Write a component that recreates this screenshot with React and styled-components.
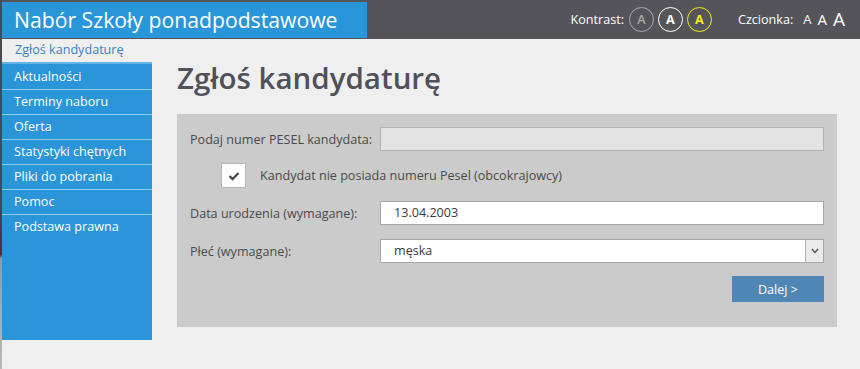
import React from 'react'
import styled, { createGlobalStyle } from 'styled-components'

const GlobalStyle = createGlobalStyle`
  html, body {
    margin: 0;
    padding: 0;
    background: #efefef;
    font-family: "Open Sans", "Noto Sans", Arial, sans-serif;
  }
`

const Page = styled.div`
  width: 860px;
  height: 369px;
  display: flex;
  overflow: hidden;
  background: #efefef;
`

const EdgeStrip = styled.div`
  width: 2px;
  flex: none;
  background: linear-gradient(180deg, #4a4a52 0%, #4a4a52 55%, #5a2a30 68%, #6a2026 69%, #9a9a9a 70%, #b9b9b9 100%);
`

const Frame = styled.div`
  flex: 1;
  display: flex;
  flex-direction: column;
`

const Header = styled.header`
  height: 39px;
  background: #55545b;
  display: flex;
  align-items: stretch;
  padding-top: 2px;
  box-sizing: border-box;
`

const Brand = styled.div`
  width: 365px;
  height: 36px;
  background: #2996da;
  color: #fff;
  font-size: 21.2px;
  line-height: 36px;
  padding-left: 12px;
  box-sizing: border-box;
`

const Tools = styled.div`
  flex: 1;
  display: flex;
  align-items: center;
  justify-content: flex-end;
  padding-right: 15px;
  color: #fff;
  font-size: 12.6px;
  padding-bottom: 2px;
`

const ToolLabel = styled.span`
  margin-right: ${p => p.$gap || 5}px;
`

const Contrast = styled.span`
  width: 23px;
  height: 23px;
  border-radius: 50%;
  border: 1px solid ${p => p.$color};
  color: ${p => p.$color};
  font-weight: ${p => (p.$bold ? 700 : 600)};
  display: inline-flex;
  align-items: center;
  justify-content: center;
  font-size: 12.6px;
  margin-right: 4px;
`

const Spacer = styled.span`
  width: 22px;
`

const SizeA = styled.span`
  font-size: ${p => p.$size}px;
  margin-left: ${p => p.$gap}px;
  line-height: 1;
`

const Body = styled.div`
  flex: 1;
  display: flex;
`

const Aside = styled.aside`
  width: 150px;
  display: flex;
  flex-direction: column;
`

const Crumb = styled.div`
  height: 23px;
  border-bottom: 2px solid #5fb4e8;
  color: #3b7fc4;
  font-size: 12.6px;
  line-height: 22px;
  padding-left: 13px;
`

const Nav = styled.ul`
  list-style: none;
  margin: 0;
  padding: 1px 0 0;
  height: 275px;
  background: #2a96d9;
`

const NavItem = styled.li`
  height: 24px;
  line-height: 24px;
  color: #fff;
  font-size: 12.6px;
  padding-left: 12px;
  border-bottom: 1px solid ${p => (p.$last ? 'transparent' : '#8fcbef')};
`

const Main = styled.main`
  padding-left: 25px;
  width: 660px;
`

const Title = styled.h1`
  margin: 17px 0 0;
  height: 58px;
  font-size: 29.5px;
  font-weight: 600;
  color: #50505a;
  line-height: 44px;
`

const Panel = styled.form`
  background: #cbcbcb;
  height: 213px;
  padding: 13px 13px 0;
  box-sizing: border-box;
`

const Row = styled.div`
  display: flex;
  align-items: center;
  height: 24px;
  margin-bottom: ${p => p.$mb || 14}px;
`

const Label = styled.label`
  width: 190px;
  color: #4a4a4a;
  font-size: 12.6px;
`

const Field = styled.div`
  flex: 1;
  height: 24px;
  box-sizing: border-box;
  border: 1px solid ${p => (p.$disabled ? '#b3b3b3' : '#a6a6a6')};
  background: ${p => (p.$disabled ? '#e3e3e3' : '#fff')};
  color: #3a3a3a;
  font-size: 12.6px;
  line-height: 22px;
  padding-left: 13px;
  display: flex;
  justify-content: space-between;
`

const Arrow = styled.span`
  width: 17px;
  border-left: 1px solid #b5b5b5;
  background: #eaeaea;
  display: flex;
  align-items: center;
  justify-content: center;
`

const CheckRow = styled.div`
  display: flex;
  align-items: center;
  padding-left: 31px;
  height: 25px;
  margin-bottom: 13px;
`

const Box = styled.span`
  width: 23px;
  height: 23px;
  background: #fff;
  border: 1px solid #b8b8b8;
  display: flex;
  align-items: center;
  justify-content: center;
  margin-right: 14px;
`

const CheckText = styled.span`
  color: #4a4a4a;
  font-size: 12.6px;
`

const Actions = styled.div`
  display: flex;
  justify-content: flex-end;
`

const Button = styled.button`
  width: 92px;
  height: 26px;
  border: 0;
  background: #4f86b5;
  color: #fff;
  font-family: inherit;
  font-size: 12.6px;
  padding: 0;
`

const menu = ['Aktualności', 'Terminy naboru', 'Oferta', 'Statystyki chętnych', 'Pliki do pobrania', 'Pomoc', 'Podstawa prawna']

export default function App() {
  return (
    <>
      <GlobalStyle />
      <Page>
        <EdgeStrip />
        <Frame>
          <Header>
            <Brand>Nabór Szkoły ponadpodstawowe</Brand>
            <Tools>
              <ToolLabel>Kontrast:</ToolLabel>
              <Contrast $color="#a9a9ad">A</Contrast>
              <Contrast $color="#ffffff" $bold>A</Contrast>
              <Contrast $color="#f2ee14" $bold>A</Contrast>
              <Spacer />
              <ToolLabel $gap={2}>Czcionka:</ToolLabel>
              <SizeA $size={13} $gap={8}>A</SizeA>
              <SizeA $size={15} $gap={6}>A</SizeA>
              <SizeA $size={19} $gap={6}>A</SizeA>
            </Tools>
          </Header>
          <Body>
            <Aside>
              <Crumb>Zgłoś kandydaturę</Crumb>
              <Nav>
                {menu.map((m, i) => (
                  <NavItem key={m} $last={i === menu.length - 1}>{m}</NavItem>
                ))}
              </Nav>
            </Aside>
            <Main>
              <Title>Zgłoś kandydaturę</Title>
              <Panel>
                <Row $mb={12}>
                  <Label>Podaj numer PESEL kandydata:</Label>
                  <Field $disabled />
                </Row>
                <CheckRow>
                  <Box>
                    <svg width="12" height="10" viewBox="0 0 12 10">
                      <path d="M1.5 5.2 L4.6 8 L10.5 2" fill="none" stroke="#4a4a55" strokeWidth="2.4" />
                    </svg>
                  </Box>
                  <CheckText>Kandydat nie posiada numeru Pesel (obcokrajowcy)</CheckText>
                </CheckRow>
                <Row>
                  <Label>Data urodzenia (wymagane):</Label>
                  <Field>13.04.2003</Field>
                </Row>
                <Row $mb={13}>
                  <Label>Płeć (wymagane):</Label>
                  <Field>
                    <span>męska</span>
                    <Arrow>
                      <svg width="8" height="6" viewBox="0 0 8 6">
                        <path d="M1 1 L4 4.5 L7 1" fill="none" stroke="#555" strokeWidth="1.4" />
                      </svg>
                    </Arrow>
                  </Field>
                </Row>
                <Actions>
                  <Button type="button">Dalej &gt;</Button>
                </Actions>
              </Panel>
            </Main>
          </Body>
        </Frame>
      </Page>
    </>
  )
}
